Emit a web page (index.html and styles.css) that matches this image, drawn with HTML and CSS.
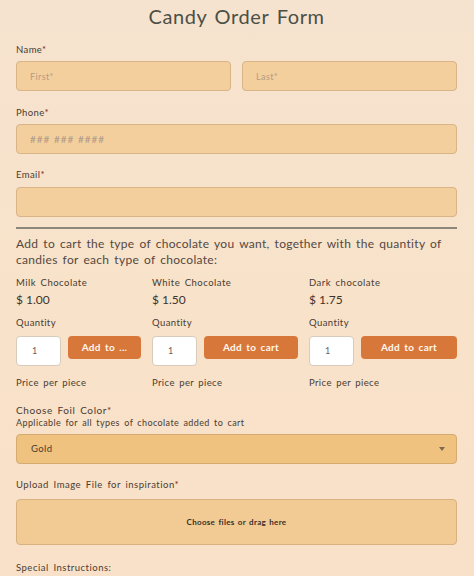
FILE: index.html
```html
<!DOCTYPE html>
<html lang="en">
<head>
<meta charset="utf-8">
<title>Candy Order Form</title>
<link rel="stylesheet" href="styles.css">
</head>
<body>
<form class="form">
  <h1 class="title">Candy Order Form</h1>

  <div class="field field-name">
    <label class="label">Name<span class="req">*</span></label>
    <div class="name-row">
      <div class="input"><span class="ph">First*</span></div>
      <div class="input"><span class="ph">Last*</span></div>
    </div>
  </div>

  <div class="field field-phone">
    <label class="label">Phone<span class="req">*</span></label>
    <div class="input"><span class="ph ph-phone">### ### ####</span></div>
  </div>

  <div class="field field-email">
    <label class="label">Email<span class="req">*</span></label>
    <div class="input"></div>
  </div>

  <hr class="divider">

  <p class="intro">Add to cart the type of chocolate you want, together with the quantity of candies for each type of chocolate:</p>

  <div class="products">
    <div class="product">
      <div class="p-name">Milk Chocolate</div>
      <div class="p-price">$ 1.00</div>
      <div class="p-qlabel">Quantity</div>
      <div class="p-controls">
        <div class="qty">1</div>
        <button type="button" class="cart">Add to ...</button>
      </div>
      <div class="p-note">Price per piece</div>
    </div>
    <div class="product">
      <div class="p-name">White Chocolate</div>
      <div class="p-price">$ 1.50</div>
      <div class="p-qlabel">Quantity</div>
      <div class="p-controls">
        <div class="qty">1</div>
        <button type="button" class="cart">Add to cart</button>
      </div>
      <div class="p-note">Price per piece</div>
    </div>
    <div class="product">
      <div class="p-name">Dark chocolate</div>
      <div class="p-price">$ 1.75</div>
      <div class="p-qlabel">Quantity</div>
      <div class="p-controls">
        <div class="qty">1</div>
        <button type="button" class="cart">Add to cart</button>
      </div>
      <div class="p-note">Price per piece</div>
    </div>
  </div>

  <div class="field field-foil">
    <label class="label">Choose Foil Color<span class="req">*</span></label>
    <div class="sublabel">Applicable for all types of chocolate added to cart</div>
    <div class="select">
      <span class="select-value">Gold</span>
      <span class="caret"></span>
    </div>
  </div>

  <div class="field field-upload">
    <label class="label">Upload Image File for inspiration<span class="req">*</span></label>
    <div class="upload">Choose files or drag here</div>
  </div>

  <div class="field field-special">
    <label class="label">Special Instructions:</label>
  </div>
</form>
</body>
</html>
```

FILE: styles.css
```css
* {
  box-sizing: border-box;
}

html, body {
  margin: 0;
  padding: 0;
}

body {
  background: linear-gradient(180deg, #f6e3cf 0%, #f8e2c9 60%, #f8e1c8 100%);
  font-family: Lato, "Open Sans", sans-serif;
  color: #4f4138;
  width: 474px;
  height: 576px;
  overflow: hidden;
}

.form {
  padding: 2px 17px 0 16px;
}

.title {
  margin: 0;
  font-size: 20px;
  line-height: 28px;
  font-weight: 400;
  text-align: center;
  color: #4a5046;
  letter-spacing: 0.6px;
  word-spacing: 2px;
}

.label {
  display: block;
  font-size: 9.5px;
  line-height: 14px;
  letter-spacing: 0.4px;
  color: #4a3b31;
}

.req {
  color: #7a2a1c;
}

.field-name { margin-top: 13px; }
.field-phone { margin-top: 15px; }
.field-email { margin-top: 14px; }

.field .input {
  margin-top: 4px;
}

.field-email .input {
  margin-top: 5px;
}

.name-row {
  display: grid;
  grid-template-columns: 1fr 1fr;
  gap: 11px;
  margin-top: 4px;
}

.name-row .input {
  margin-top: 0;
}

.input {
  height: 30px;
  background: #f3cf9e;
  border: 1px solid #d8b487;
  border-radius: 4px;
  display: flex;
  align-items: center;
  padding-left: 13px;
}

.ph {
  font-size: 9px;
  letter-spacing: 0.4px;
  color: #b59c84;
}

.ph-phone {
  font-size: 10px;
  letter-spacing: 1px;
  color: #ae9985;
}

.divider {
  margin: 10px 0 0;
  border: 0;
  height: 1.5px;
  background: #8e877c;
}

.intro {
  margin: 7px 0 0;
  font-size: 12px;
  line-height: 16px;
  letter-spacing: 0.3px;
  word-spacing: 1.6px;
  color: #54483f;
}

.products {
  display: grid;
  grid-template-columns: 125px 146px 148px;
  column-gap: 11px;
  margin-top: 8px;
}

.p-name {
  font-size: 9.5px;
  line-height: 14px;
  letter-spacing: 0.5px;
  word-spacing: 1.5px;
  color: #4a3b31;
}

.p-price {
  margin-top: 2px;
  font-size: 12px;
  line-height: 16px;
  color: #3f342c;
}

.p-qlabel {
  margin-top: 8px;
  font-size: 9.5px;
  line-height: 14px;
  letter-spacing: 0.4px;
  color: #4a3b31;
}

.p-controls {
  display: flex;
  align-items: flex-start;
  gap: 7px;
  margin-top: 6px;
}

.qty {
  flex: 0 0 45px;
  height: 30px;
  background: #ffffff;
  border: 1px solid #d6cbbd;
  border-radius: 4px;
  display: flex;
  align-items: center;
  padding-left: 15px;
  font-size: 9px;
  color: #6b6158;
}

.cart {
  flex: 1 1 auto;
  height: 23px;
  margin: 0;
  border: 0;
  border-radius: 4px;
  background: #d8773a;
  color: #fff8ef;
  font-family: Lato, "Open Sans", sans-serif;
  font-size: 10px;
  font-weight: 700;
  letter-spacing: 0.3px;
  word-spacing: 1.5px;
  padding: 0;
  cursor: pointer;
}

.p-note {
  margin-top: 10px;
  font-size: 9.5px;
  line-height: 14px;
  letter-spacing: 0.4px;
  word-spacing: 1.5px;
  color: #4a3b31;
}

.field-foil { margin-top: 13px; }

.field-foil .label {
  font-size: 10px;
  letter-spacing: 0.6px;
  word-spacing: 1.5px;
}

.sublabel {
  font-size: 9px;
  line-height: 12px;
  letter-spacing: 0.4px;
  word-spacing: 1.6px;
  color: #4a3b31;
}

.select {
  margin-top: 5px;
  height: 30px;
  background: #f0c27f;
  border: 1px solid #d6ab72;
  border-radius: 4px;
  display: flex;
  align-items: center;
  justify-content: space-between;
  padding: 0 11px 0 14px;
}

.select-value {
  font-size: 9.5px;
  letter-spacing: 0.4px;
  color: #4a3b31;
}

.caret {
  width: 0;
  height: 0;
  border-left: 3.5px solid transparent;
  border-right: 3.5px solid transparent;
  border-top: 4px solid #7e6850;
}

.field-upload { margin-top: 14px; }

.field-upload .label,
.field-special .label {
  letter-spacing: 0.5px;
  word-spacing: 1.8px;
}

.upload {
  margin-top: 7px;
  height: 46px;
  background: #f2cb94;
  border: 1px solid #d8b27e;
  border-radius: 4px;
  display: flex;
  align-items: center;
  justify-content: center;
  font-size: 8px;
  font-weight: 700;
  letter-spacing: 0.3px;
  word-spacing: 1px;
  color: #3b2f27;
}

.field-special { margin-top: 16px; }
```
